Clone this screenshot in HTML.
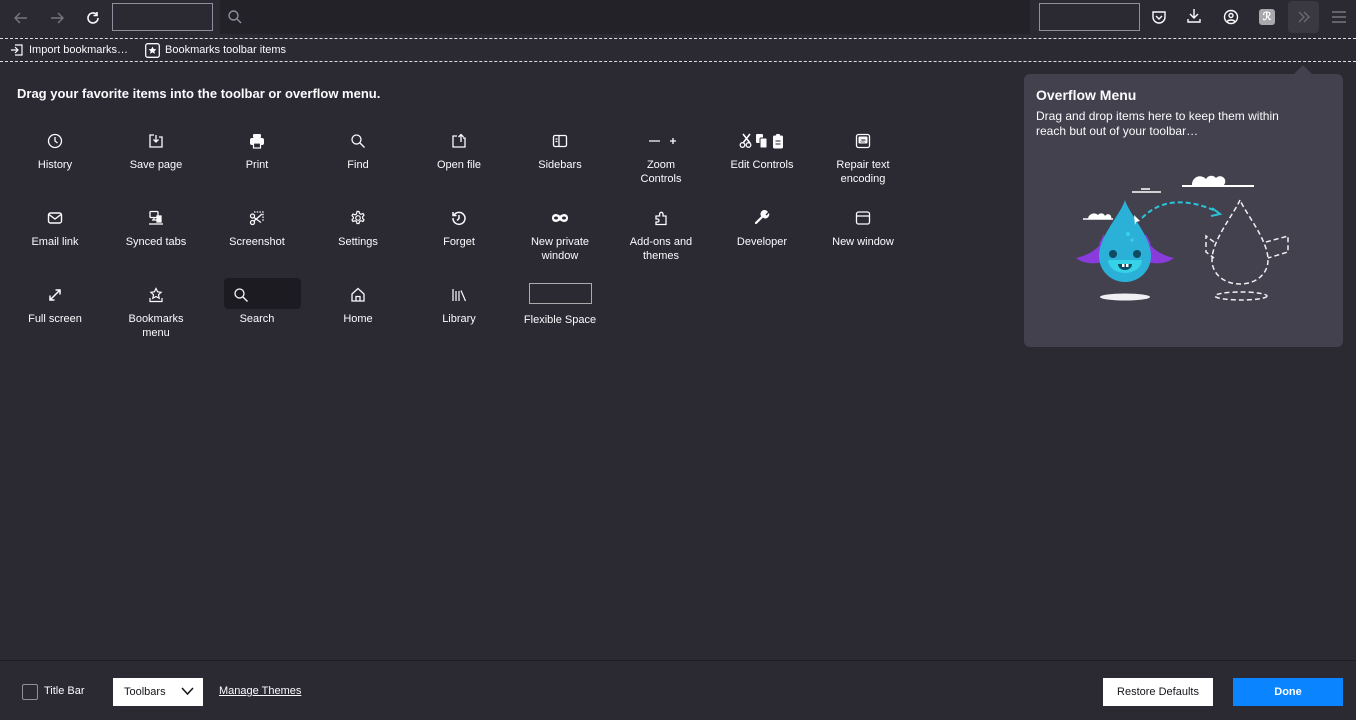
<!DOCTYPE html>
<html><head><meta charset="utf-8">
<style>
*{box-sizing:border-box;margin:0;padding:0}
body{width:1356px;height:720px;background:#2b2a33;font-family:"Liberation Sans",sans-serif;color:#fbfbfe;position:relative;overflow:hidden;font-size:11px}
.top{position:absolute;left:0;top:0;width:1356px;height:36px;background:#2b2a33}
.bm{position:absolute;left:0;top:38px;width:1356px;height:24px;border-top:1px dashed #ddd;border-bottom:1px dashed #ddd}
.abs{position:absolute}
.item{position:absolute;width:96px;text-align:center;font-size:11px;line-height:14px}
.item svg{display:block;margin:0 auto 9px auto}
.panel{position:absolute;left:1024px;top:74px;width:319px;height:273px;background:#42414d;border-radius:6px}
.footer{position:absolute;left:0;top:660px;width:1356px;height:60px;border-top:1px solid #1f1e25}
</style></head><body>
<div class="top">
 <svg class="abs" style="left:12px;top:9px" width="18" height="18" viewBox="0 0 18 18" fill="none" stroke="#77767d" stroke-width="1.4"><path d="M15 9H3M8 4L3 9l5 5"/></svg>
 <svg class="abs" style="left:48px;top:9px" width="18" height="18" viewBox="0 0 18 18" fill="none" stroke="#77767d" stroke-width="1.4"><path d="M3 9h12M10 4l5 5-5 5"/></svg>
 <svg class="abs" style="left:84px;top:9px" width="18" height="18" viewBox="0 0 18 18" fill="none" stroke="#fbfbfe" stroke-width="1.6"><path d="M14 9a5 5 0 1 1-1.5-3.6"/><path d="M13 3v3.5H9.5"/></svg>
 <div class="abs" style="left:112px;top:3px;width:101px;height:28px;border:1px solid #8f8f9d"></div>
 <div class="abs" style="left:220px;top:0;width:810px;height:34px;background:#232229"></div>
 <svg class="abs" style="left:227px;top:9px" width="16" height="16" viewBox="0 0 16 16" fill="none" stroke="#8f8f9d" stroke-width="1.4"><circle cx="6.5" cy="6.5" r="4.5"/><path d="M10 10l4 4"/></svg>
 <div class="abs" style="left:1039px;top:3px;width:101px;height:28px;border:1px solid #8f8f9d"></div>
 <svg class="abs" style="left:1151px;top:9px" width="16" height="16" viewBox="0 0 16 16" fill="none" stroke="#fbfbfe" stroke-width="1.4"><path d="M2 3h12v5a6 6 0 0 1-12 0z"/><path d="M5 7l3 3 3-3"/></svg>
 <svg class="abs" style="left:1186px;top:8px" width="16" height="16" viewBox="0 0 16 16" fill="none" stroke="#fbfbfe" stroke-width="1.4"><path d="M8 1v9M4 6l4 4 4-4M2 11v3h12v-3"/></svg>
 <svg class="abs" style="left:1223px;top:9px" width="16" height="16" viewBox="0 0 16 16" fill="none" stroke="#fbfbfe" stroke-width="1.4"><circle cx="8" cy="8" r="6.5"/><circle cx="8" cy="6.5" r="2"/><path d="M4 12.5c2-2 6-2 8 0"/></svg>
 <div class="abs" style="left:1259px;top:9px;width:16px;height:16px;background:#a8a8ad;border-radius:3px;color:#fff;font-size:11px;font-weight:bold;text-align:center;line-height:16px">ℛ</div>
 <div class="abs" style="left:1288px;top:1px;width:31px;height:32px;background:#3a3941;border-radius:4px"></div>
 <svg class="abs" style="left:1296px;top:10px" width="16" height="14" viewBox="0 0 16 14" fill="none" stroke="#6a6970" stroke-width="1.4"><path d="M3 2l5 5-5 5M8 2l5 5-5 5"/></svg>
 <svg class="abs" style="left:1331px;top:10px" width="16" height="14" viewBox="0 0 16 14" fill="none" stroke="#77767d" stroke-width="1.4"><path d="M1 2h14M1 7h14M1 12h14"/></svg>
</div>
<div class="bm">
 <svg class="abs" style="left:10px;top:4px" width="14" height="14" viewBox="0 0 14 14" fill="none" stroke="#fbfbfe" stroke-width="1.2"><path d="M5 2h7v10H5M1 7h7M5 4l3 3-3 3"/></svg>
 <span class="abs" style="left:29px;top:5px;font-size:11px">Import bookmarks…</span>
 <svg class="abs" style="left:145px;top:4px" width="15" height="15" viewBox="0 0 15 15"><rect x="0.7" y="0.7" width="13.6" height="13.6" rx="2" fill="none" stroke="#fbfbfe" stroke-width="1.3"/><path d="M7.5 3.5l1.2 2.5 2.7.3-2 1.8.6 2.7-2.5-1.4-2.5 1.4.6-2.7-2-1.8 2.7-.3z" fill="#fbfbfe"/></svg>
 <span class="abs" style="left:165px;top:5px;font-size:11px">Bookmarks toolbar items</span>
</div>
<svg class="abs" style="left:1293px;top:63px" width="20" height="12" viewBox="0 0 20 12"><path d="M0 12L10 2l10 10z" fill="#42414d"/></svg>
<div class="abs" style="left:17px;top:86px;font-size:13px;font-weight:bold">Drag your favorite items into the toolbar or overflow menu.</div>

<div class="abs" style="left:224px;top:278px;width:77px;height:31px;background:#1c1b22;border-radius:4px"></div>
<div class="abs" style="left:529px;top:283px;width:63px;height:21px;border:1px solid #aaa"></div>

<!-- row 1 -->
<div class="item" style="left:7px;top:133px"><svg width="16" height="16" viewBox="0 0 16 16" fill="none" stroke="#fbfbfe" stroke-width="1.3"><circle cx="8" cy="8" r="6.5"/><path d="M8 4v4l2.5 2"/></svg><div style="margin-top:1px">History</div></div>
<div class="item" style="left:108px;top:133px"><svg width="16" height="16" viewBox="0 0 16 16" fill="none" stroke="#fbfbfe" stroke-width="1.3"><path d="M6 2H2v12h12V4H11M8 2v7M5.5 6.5L8 9l2.5-2.5"/></svg><div style="margin-top:1px">Save page</div></div>
<div class="item" style="left:209px;top:133px"><svg width="16" height="16" viewBox="0 0 16 16" fill="#fbfbfe"><rect x="4" y="1" width="8" height="4" rx="1"/><rect x="1" y="5" width="14" height="7" rx="2"/><rect x="4.5" y="10" width="7" height="5" fill="#2b2a33" stroke="#fbfbfe" stroke-width="1.2"/></svg><div style="margin-top:1px">Print</div></div>
<div class="item" style="left:310px;top:133px"><svg width="16" height="16" viewBox="0 0 16 16" fill="none" stroke="#fbfbfe" stroke-width="1.3"><circle cx="6.5" cy="6.5" r="4.5"/><path d="M10 10l4.5 4.5"/></svg><div style="margin-top:1px">Find</div></div>
<div class="item" style="left:411px;top:133px"><svg width="16" height="16" viewBox="0 0 16 16" fill="none" stroke="#fbfbfe" stroke-width="1.3"><path d="M6 3H2v11h12V5h-2M10 9V1.5M7.5 4L10 1.5 12.5 4"/></svg><div style="margin-top:1px">Open file</div></div>
<div class="item" style="left:512px;top:133px"><svg width="16" height="16" viewBox="0 0 16 16" fill="none" stroke="#fbfbfe" stroke-width="1.3"><rect x="1.5" y="2.5" width="13" height="11" rx="1.5"/><path d="M7 2.5v11M3.5 6h2M3.5 8.5h2"/></svg><div style="margin-top:1px">Sidebars</div></div>
<div class="item" style="left:613px;top:133px"><svg width="36" height="16" viewBox="0 0 36 16" fill="none" stroke="#fbfbfe" stroke-width="1.3"><path d="M6 8h11M27 8h6M30 5v6"/></svg><div style="margin-top:1px">Zoom<br>Controls</div></div>
<div class="item" style="left:714px;top:133px"><svg width="46" height="16" viewBox="0 0 46 16" fill="#fbfbfe"><circle cx="3.5" cy="12" r="2.3" fill="none" stroke="#fbfbfe" stroke-width="1.3"/><circle cx="9.5" cy="12" r="2.3" fill="none" stroke="#fbfbfe" stroke-width="1.3"/><path d="M4 1l7 9M11 1l-7 9" stroke="#fbfbfe" stroke-width="1.6"/><rect x="17" y="1" width="7" height="9" rx="1"/><rect x="21" y="5" width="7" height="10" rx="1" stroke="#2b2a33"/><rect x="34" y="2.5" width="10" height="13" rx="1.5"/><rect x="37" y="1" width="4" height="3" rx="1"/><path d="M36.5 8h5M36.5 11h5" stroke="#2b2a33"/></svg><div style="margin-top:1px">Edit Controls</div></div>
<div class="item" style="left:815px;top:133px"><svg width="16" height="16" viewBox="0 0 16 16"><rect x="1.5" y="1.5" width="13" height="13" rx="2" fill="none" stroke="#fbfbfe" stroke-width="1.3"/><rect x="3.5" y="3.5" width="9" height="7" rx="1" fill="#fbfbfe"/><text x="8" y="9.5" font-size="6" text-anchor="middle" fill="#2b2a33" font-family="Liberation Sans">æ</text></svg><div style="margin-top:1px">Repair text<br>encoding</div></div>
<!-- row 2 -->
<div class="item" style="left:7px;top:210px"><svg width="16" height="16" viewBox="0 0 16 16" fill="none" stroke="#fbfbfe" stroke-width="1.4"><rect x="1.5" y="3" width="13" height="10" rx="2"/><path d="M2 4.5l6 4.5 6-4.5"/></svg><div style="margin-top:1px">Email link</div></div>
<div class="item" style="left:108px;top:210px"><svg width="16" height="16" viewBox="0 0 16 16" fill="none" stroke="#fbfbfe" stroke-width="1.3"><rect x="2" y="1.5" width="8" height="6" rx="1"/><path d="M4 10h6M6 7.5v3"/><rect x="9" y="6" width="4" height="6" fill="#fbfbfe"/><path d="M1 14h14"/></svg><div style="margin-top:1px">Synced tabs</div></div>
<div class="item" style="left:209px;top:210px"><svg width="16" height="16" viewBox="0 0 16 16" fill="none" stroke="#fbfbfe" stroke-width="1.3"><path d="M5 2h9v9" stroke-dasharray="1.5 1.2"/><circle cx="3.5" cy="12.5" r="2"/><circle cx="3.5" cy="6" r="2"/><path d="M5 11l8-7M5 7.5l7 5"/></svg><div style="margin-top:1px">Screenshot</div></div>
<div class="item" style="left:310px;top:210px"><svg width="16" height="16" viewBox="0 0 16 16" fill="none" stroke="#fbfbfe" stroke-width="1.2"><circle cx="8" cy="8" r="2.3"/><path d="M7 1.5h2l.5 2 1.5.8 2-.8 1 1.7-1.4 1.5v1.6l1.4 1.5-1 1.7-2-.8-1.5.8-.5 2H7l-.5-2-1.5-.8-2 .8-1-1.7 1.4-1.5V7.2L2 5.7l1-1.7 2 .8 1.5-.8z"/></svg><div style="margin-top:1px">Settings</div></div>
<div class="item" style="left:411px;top:210px"><svg width="16" height="16" viewBox="0 0 16 16" fill="none" stroke="#fbfbfe" stroke-width="1.5"><path d="M3 5a6 6 0 1 1-1 3"/><path d="M2 2v3.5h3.5M8 5v3.5l-2 2"/></svg><div style="margin-top:1px">Forget</div></div>
<div class="item" style="left:512px;top:210px"><svg width="18" height="16" viewBox="0 0 18 16" fill="#fbfbfe"><path d="M1 8c0-3 2-4 4-4 2 0 3 1.5 4 1.5S11 4 13 4c2 0 4 1 4 4s-2 4-4 4-3-1.5-4-1.5S7 12 5 12c-2 0-4-1-4-4z"/><ellipse cx="5" cy="8" rx="2" ry="1.5" fill="#2b2a33"/><ellipse cx="13" cy="8" rx="2" ry="1.5" fill="#2b2a33"/></svg><div style="margin-top:1px">New private<br>window</div></div>
<div class="item" style="left:613px;top:210px"><svg width="16" height="16" viewBox="0 0 16 16" fill="none" stroke="#fbfbfe" stroke-width="1.3"><path d="M3 14.5h10V6h-3V4a1.7 1.7 0 0 0-3.4 0v2H3v3h1.5a1.5 1.5 0 0 1 0 3H3z"/></svg><div style="margin-top:1px">Add-ons and<br>themes</div></div>
<div class="item" style="left:714px;top:210px"><svg width="16" height="16" viewBox="0 0 16 16" fill="#fbfbfe"><path d="M2 13l6-6" stroke="#fbfbfe" stroke-width="2.2" stroke-linecap="round"/><path d="M7 6a4 4 0 0 1 7-4l-2.5 2.5 1 1L15 3a4 4 0 0 1-5.5 5z"/></svg><div style="margin-top:1px">Developer</div></div>
<div class="item" style="left:815px;top:210px"><svg width="16" height="16" viewBox="0 0 16 16" fill="none" stroke="#fbfbfe" stroke-width="1.3"><rect x="1.5" y="2" width="13" height="12" rx="2"/><path d="M1.5 6h13"/></svg><div style="margin-top:1px">New window</div></div>
<!-- row 3 -->
<div class="item" style="left:7px;top:287px"><svg width="16" height="16" viewBox="0 0 16 16" fill="none" stroke="#fbfbfe" stroke-width="1.5"><path d="M3 13L13 3M8.5 3H13v4.5M3 8.5V13h4.5"/></svg><div style="margin-top:1px">Full screen</div></div>
<div class="item" style="left:108px;top:287px"><svg width="16" height="16" viewBox="0 0 16 16" fill="none" stroke="#fbfbfe" stroke-width="1.2"><path d="M8 1.5l1.6 3.3 3.5.5-2.6 2.4.7 3.5L8 9.5l-3.2 1.7.7-3.5L2.9 5.3l3.5-.5z"/><path d="M2 11v3.5h12V11"/></svg><div style="margin-top:1px">Bookmarks<br>menu</div></div>
<div class="item" style="left:209px;top:287px"><svg width="16" height="16" viewBox="0 0 16 16" fill="none" stroke="#fbfbfe" stroke-width="1.3" style="margin-left:24px"><circle cx="6.5" cy="6.5" r="4.5"/><path d="M10 10l4.5 4.5"/></svg><div style="margin-top:1px">Search</div></div>
<div class="item" style="left:310px;top:287px"><svg width="16" height="16" viewBox="0 0 16 16" fill="none" stroke="#fbfbfe" stroke-width="1.3"><path d="M2 7l6-5.5L14 7v7H2z"/><path d="M6 14V9.5h4V14"/></svg><div style="margin-top:1px">Home</div></div>
<div class="item" style="left:411px;top:287px"><svg width="16" height="16" viewBox="0 0 16 16" fill="none" stroke="#fbfbfe" stroke-width="1.2"><path d="M2 2v12M5 4v10M8 4v10M10 3.5l4.5 10.5"/></svg><div style="margin-top:1px">Library</div></div>
<div class="item" style="left:512px;top:313px">Flexible Space</div>

<div class="panel">
 <div class="abs" style="left:12px;top:13px;font-size:14px;font-weight:bold">Overflow Menu</div>
 <div class="abs" style="left:12px;top:35px;width:272px;font-size:12px;line-height:15px">Drag and drop items here to keep them within reach but out of your toolbar…</div>
 <svg class="abs" style="left:0;top:76px" width="319" height="180" viewBox="0 76 319 180">
  <!-- clouds -->
  <path d="M158 112h72" stroke="#fff" stroke-width="2"/>
  <path d="M168 111a8 8 0 0 1 14-6 6 6 0 0 1 10-1 5 5 0 0 1 8 7z" fill="#fff"/>
  <path d="M108 118h29M117 115h9" stroke="#fff" stroke-width="1.5"/>
  <path d="M59 145h30" stroke="#fff" stroke-width="1.5"/>
  <path d="M64 145a6 6 0 0 1 10-4 4 4 0 0 1 7 1 3 3 0 0 1 6 3z" fill="#fff"/>
  <!-- shadows -->
  <ellipse cx="101" cy="223" rx="25" ry="3.5" fill="#f0f0f4"/>
  <ellipse cx="217" cy="222" rx="26" ry="4" fill="none" stroke="#f0f0f4" stroke-width="1.5" stroke-dasharray="5 3"/>
  <!-- wings -->
  <path d="M78 168q-8 12-26 16 10 8 28 4z" fill="#8a3bdc"/>
  <path d="M124 168q8 12 26 16-10 8-28 4z" fill="#8a3bdc"/>
  <path d="M80 160l-5 10 8 3z M122 160l5 10-8 3z" fill="#8a3bdc"/>
  <!-- body -->
  <path d="M101 126c-4 14-26 36-26 56 0 15 12 26 26 26s26-11 26-26c0-20-22-42-26-56z" fill="#2bb0d8"/>
  <path d="M84 186a17 13 0 0 0 34 0z" fill="#36d2e8"/>
  <circle cx="89" cy="180" r="4" fill="#0e4a61"/><circle cx="113" cy="180" r="4" fill="#0e4a61"/>
  <path d="M94 190h14a7 6 0 0 1-14 0z" fill="#0e4a61"/>
  <rect x="98" y="190" width="2.5" height="3" fill="#fff"/><rect x="102" y="190" width="2.5" height="3" fill="#fff"/>
  <circle cx="104" cy="160" r="2" fill="#36d2e8"/><circle cx="108" cy="166" r="1.6" fill="#36d2e8"/>
  <path d="M110 141l6 6-4 1-1 3z" fill="#fff"/>
  <!-- arrow -->
  <path d="M118 144q28-28 76-6" fill="none" stroke="#2bc3d8" stroke-width="2" stroke-dasharray="5 3"/>
  <path d="M188 134l8 6-9 2" fill="none" stroke="#2bc3d8" stroke-width="2"/>
  <!-- ghost -->
  <path d="M216 126c-6 14-28 40-28 60 0 14 12 24 28 24s28-10 28-24c0-20-22-46-28-60z M190 168l-8-6v16l8 6 M242 168l22-6v16l-20 6" fill="none" stroke="#f0f0f4" stroke-width="1.5" stroke-dasharray="5 3"/>
 </svg>
</div>

<div class="footer">
 <div class="abs" style="left:22px;top:23px;width:16px;height:16px;border:1px solid #8f8f9d;border-radius:2px"></div>
 <span class="abs" style="left:44px;top:24px;font-size:11px">Title Bar</span>
 <div class="abs" style="left:113px;top:17px;width:90px;height:28px;background:#fff;color:#15141a;font-size:11px;line-height:28px;padding-left:11px">Toolbars
  <svg class="abs" style="left:68px;top:9px" width="13" height="9" viewBox="0 0 13 9" fill="none" stroke="#15141a" stroke-width="1.5"><path d="M1 1l5.5 6L12 1"/></svg></div>
 <span class="abs" style="left:219px;top:24px;font-size:11px;text-decoration:underline">Manage Themes</span>
 <div class="abs" style="left:1103px;top:17px;width:110px;height:28px;background:#fff;color:#15141a;font-size:11px;line-height:28px;text-align:center">Restore Defaults</div>
 <div class="abs" style="left:1233px;top:17px;width:110px;height:28px;background:#0a84ff;color:#fff;font-size:11px;font-weight:bold;line-height:28px;text-align:center">Done</div>
</div>
</body></html>
